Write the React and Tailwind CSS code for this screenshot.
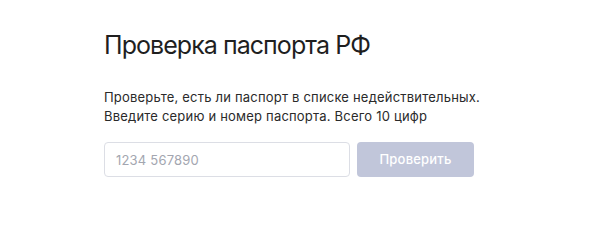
export default function App() {
  return (
    <div className="w-[600px] h-[223px] bg-white" style={{ fontFamily: "Inter, 'Noto Sans', sans-serif" }}>
      <div className="pl-[104px] pt-[30px]">
        <h1 className="text-[25px] leading-[31px] font-normal text-[#1f1f1f] tracking-[-0.95px]">Проверка паспорта РФ</h1>
        <p className="mt-[27px] text-[13px] leading-[19px] text-[#2a2a2a] tracking-[0.2px]">
          Проверьте, есть ли паспорт в списке недействительных.
          <br />
          Введите серию и номер паспорта. Всего 10 цифр
        </p>
        <div className="mt-[16px] flex gap-[7px]">
          <input
            className="w-[246px] h-[35px] rounded-[4px] border border-[#dcdee5] px-[11px] text-[13px] tracking-[0.2px] text-[#333] placeholder:text-[#a3a6b0] outline-none"
            placeholder="1234 567890"
          />
          <button className="w-[117px] h-[35px] rounded-[4px] bg-[#c1c6da] text-white text-[13px] font-medium tracking-[0.2px]">
            Проверить
          </button>
        </div>
      </div>
    </div>
  );
}
